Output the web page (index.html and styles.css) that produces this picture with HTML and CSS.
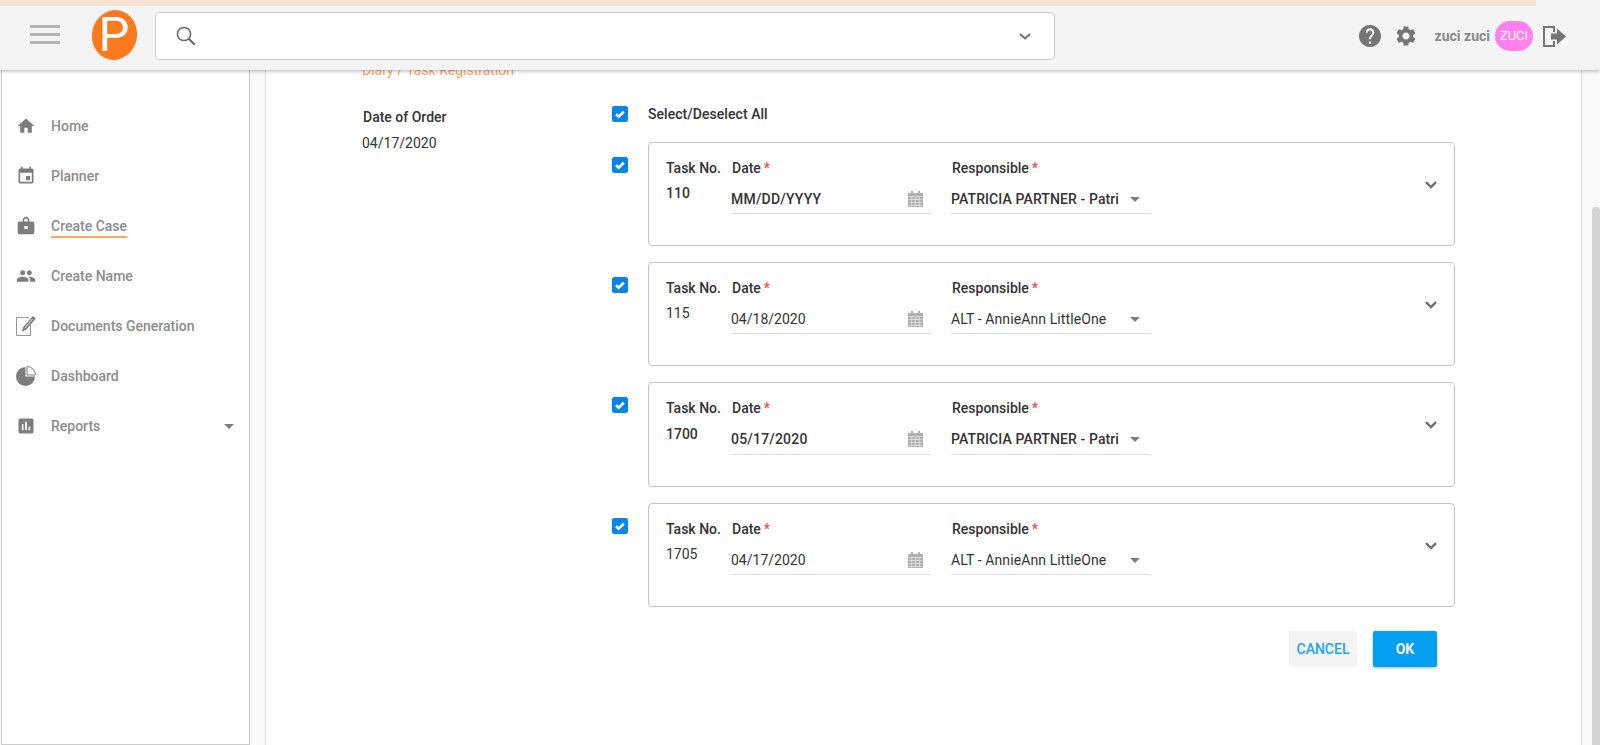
FILE: index.html
```html
<!DOCTYPE html>
<html lang="en">

<head>
  <meta charset="UTF-8">
  <title>Diary / Task Registration</title>
  <link rel="stylesheet" href="styles.css">
</head>

<body>
  <svg class="defs" aria-hidden="true">
    <symbol id="check-mark" viewBox="0 0 16 16">
      <path d="M4 8.300l2.600 2.400 5.200-5" />
    </symbol>
    <symbol id="calendar" viewBox="0 0 15 16">
      <path fill="#b0b0b0" d="M3 0h2v2h5V0h2v2h2c.6 0 1 .4 1 1v12c0 .6-.4 1-1 1H1c-.6 0-1-.4-1-1V3c0-.6.4-1 1-1h2z" />
      <path fill="none" stroke="#e4e4e4" stroke-width=".8" d="M1 5.500h13M1 8.500h13M1 11.500h13M1 14.500h13M3.700 5.500v10M7.500 5.500v10M11.300 5.500v10" />
    </symbol>
    <symbol id="chevron" viewBox="0 0 12 8">
      <path d="M1 1.200l5 4.800 5-4.800" />
    </symbol>
  </svg>

  <header class="topbar">
    <div class="topbar-strip"></div>
    <div class="topbar-row">
      <div class="hamburger"><span></span><span></span><span></span></div>
      <div class="logo"><span>P</span></div>
      <div class="search">
        <svg class="search-icon" viewBox="0 0 20 20">
          <circle cx="8" cy="8" r="6.600" fill="none" stroke="#666" stroke-width="1.500" />
          <path d="M12.800 12.800l6 6" stroke="#666" stroke-width="2" fill="none" />
        </svg>
        <svg class="search-chevron" viewBox="0 0 12 7">
          <path d="M1 1l5 4.400L11 1" fill="none" stroke="#6f6f6f" stroke-width="2" />
        </svg>
      </div>
      <div class="user-area">
        <svg class="help-icon" viewBox="2 2 20 20">
          <path fill="#757575" d="M12 2C6.480 2 2 6.480 2 12s4.480 10 10 10 10-4.480 10-10S17.520 2 12 2zm1 17h-2v-2h2v2zm2.070-7.750l-.9.920C13.450 12.900 13 13.500 13 15h-2v-.5c0-1.100.45-2.100 1.170-2.830l1.240-1.260c.37-.36.59-.86.59-1.410 0-1.100-.9-2-2-2s-2 .9-2 2H8c0-2.210 1.790-4 4-4s4 1.790 4 4c0 .88-.36 1.680-.93 2.250z" />
        </svg>
        <svg class="gear-icon" viewBox="2.500 2 19 20">
          <path fill="#757575" d="M19.140 12.940c.04-.3.06-.61.06-.94 0-.32-.02-.64-.07-.94l2.030-1.580c.18-.14.23-.41.12-.61l-1.920-3.320c-.12-.22-.37-.29-.59-.22l-2.390.96c-.5-.38-1.030-.7-1.620-.94l-.36-2.540c-.04-.24-.24-.41-.48-.41h-3.840c-.24 0-.43.17-.47.41l-.36 2.540c-.59.24-1.130.57-1.620.94l-2.390-.96c-.22-.08-.47 0-.59.22L2.740 8.870c-.12.21-.08.47.12.61l2.030 1.580c-.05.3-.09.63-.09.94s.02.64.07.94l-2.030 1.580c-.18.14-.23.41-.12.61l1.920 3.320c.12.22.37.29.59.22l2.390-.96c.5.38 1.030.7 1.620.94l.36 2.540c.05.24.24.41.48.41h3.840c.24 0 .44-.17.47-.41l.36-2.540c.59-.24 1.130-.56 1.620-.94l2.390.96c.22.08.47 0 .59-.22l1.920-3.320c.12-.22.07-.47-.12-.61l-2.010-1.580zM12 15.600c-1.980 0-3.600-1.620-3.600-3.600s1.620-3.600 3.600-3.600 3.600 1.620 3.600 3.600-1.620 3.600-3.600 3.600z" />
        </svg>
        <span class="user-name">zuci zuci</span>
        <span class="avatar">ZUCI</span>
        <svg class="logout-icon" viewBox="0 0 23 21">
          <path fill="none" stroke="#757575" stroke-width="2" d="M11 6V1H1v19h10v-5" />
          <path fill="#757575" d="M8 7.500h6V2.500l9 8-9 8v-5H8z" />
        </svg>
      </div>
    </div>
  </header>

  <div class="page">
    <nav class="sidebar">
      <a class="nav-item">
        <svg class="nav-icon" viewBox="0 0 24 24"><path d="M10 20v-6h4v6h5v-8h3L12 3 2 12h3v8z" /></svg>
        <span>Home</span>
      </a>
      <a class="nav-item">
        <svg class="nav-icon" viewBox="0 0 24 24"><path d="M17 12h-5v5h5v-5zM16 1v2H8V1H6v2H5c-1.110 0-1.990.9-1.990 2L3 19c0 1.100.89 2 2 2h14c1.100 0 2-.9 2-2V5c0-1.100-.9-2-2-2h-1V1h-2zm3 18H5V8h14v11z" /></svg>
        <span>Planner</span>
      </a>
      <a class="nav-item">
        <svg class="nav-icon" viewBox="0 0 24 24"><path fill-rule="evenodd" d="M8 6.500V5c0-2.200 1.800-4 4-4s4 1.800 4 4v1.500h3.500c1.400 0 2.500 1.100 2.500 2.500v10.500c0 1.400-1.100 2.500-2.500 2.500h-15C3.100 22 2 20.900 2 19.500V9c0-1.400 1.100-2.500 2.500-2.500zm2 0h4V5c0-1.100-.9-2-2-2s-2 .9-2 2zm0 5.500v3.500h4V12z" /></svg>
        <span class="nav-active">Create Case</span>
      </a>
      <a class="nav-item">
        <svg class="nav-icon" viewBox="0 0 24 24"><path d="M16 11c1.660 0 2.990-1.340 2.990-3S17.660 5 16 5c-1.660 0-3 1.340-3 3s1.340 3 3 3zm-8 0c1.660 0 2.990-1.340 2.990-3S9.660 5 8 5C6.340 5 5 6.340 5 8s1.340 3 3 3zm0 2c-2.330 0-7 1.170-7 3.500V19h14v-2.500c0-2.330-4.670-3.500-7-3.500zm8 0c-.29 0-.62.02-.97.05 1.160.84 1.970 1.970 1.970 3.450V19h6v-2.500c0-2.330-4.670-3.500-7-3.500z" /></svg>
        <span>Create Name</span>
      </a>
      <a class="nav-item">
        <svg class="nav-icon" viewBox="0 0 20 20">
          <path fill="none" stroke="#999" stroke-width="1" d="M13 1.500H.5v18h14V9" />
          <path fill="#7d7d7d" d="M16.800 0l3 2.500-9.600 11.300-4.200 2 1.100-4.500z" />
          <path fill="none" stroke="#fff" stroke-width=".8" d="M16.500 3l-7.800 9.300" />
        </svg>
        <span>Documents Generation</span>
      </a>
      <a class="nav-item">
        <svg class="nav-icon" viewBox="0 0 20 20">
          <path d="M9.500 1a9.500 9.500 0 1 0 9.500 9.500H9.500z" />
          <path fill="none" stroke="#7d7d7d" stroke-width="1" d="M11 .5a8.600 8.600 0 0 1 8.500 8.500H11z" />
        </svg>
        <span>Dashboard</span>
      </a>
      <a class="nav-item">
        <svg class="nav-icon" viewBox="0 0 24 24"><path d="M19 3H5c-1.100 0-2 .9-2 2v14c0 1.100.9 2 2 2h14c1.100 0 2-.9 2-2V5c0-1.100-.9-2-2-2zM9 17H7v-7h2v7zm4 0h-2V7h2v10zm4 0h-2v-4h2v4z" /></svg>
        <span>Reports</span>
        <i class="nav-caret"></i>
      </a>
    </nav>

    <div class="gutter"></div>

    <main class="content">
      <div class="page-title">Diary / Task Registration</div>

      <div class="form-area">
        <div class="order-col">
          <div class="order-label">Date of Order</div>
          <div class="order-value">04/17/2020</div>
        </div>

        <div class="tasks-col">
          <div class="select-all">
            <span class="check"><svg><use href="#check-mark" /></svg></span>
            <span class="select-all-label">Select/Deselect All</span>
          </div>

          <div class="task-row">
            <span class="check check-row"><svg><use href="#check-mark" /></svg></span>
            <div class="task-card is-changed">
              <div class="col-no">
                <div class="field-label">Task No.</div>
                <div class="task-no">110</div>
              </div>
              <div class="col-field">
                <div class="field-label">Date<em>*</em></div>
                <div class="field-input">
                  <span class="date-text">MM/DD/YYYY</span>
                  <svg class="cal-icon"><use href="#calendar" /></svg>
                </div>
              </div>
              <div class="col-field">
                <div class="field-label">Responsible<em>*</em></div>
                <div class="field-input">
                  <span class="select-text">PATRICIA PARTNER - Patri</span>
                  <i class="select-caret"></i>
                </div>
              </div>
              <svg class="card-chevron"><use href="#chevron" /></svg>
            </div>
          </div>

          <div class="task-row">
            <span class="check check-row"><svg><use href="#check-mark" /></svg></span>
            <div class="task-card">
              <div class="col-no">
                <div class="field-label">Task No.</div>
                <div class="task-no">115</div>
              </div>
              <div class="col-field">
                <div class="field-label">Date<em>*</em></div>
                <div class="field-input">
                  <span class="date-text">04/18/2020</span>
                  <svg class="cal-icon"><use href="#calendar" /></svg>
                </div>
              </div>
              <div class="col-field">
                <div class="field-label">Responsible<em>*</em></div>
                <div class="field-input">
                  <span class="select-text">ALT - AnnieAnn LittleOne</span>
                  <i class="select-caret"></i>
                </div>
              </div>
              <svg class="card-chevron"><use href="#chevron" /></svg>
            </div>
          </div>

          <div class="task-row">
            <span class="check check-row"><svg><use href="#check-mark" /></svg></span>
            <div class="task-card is-changed is-tall">
              <div class="col-no">
                <div class="field-label">Task No.</div>
                <div class="task-no">1700</div>
              </div>
              <div class="col-field">
                <div class="field-label">Date<em>*</em></div>
                <div class="field-input">
                  <span class="date-text">05/17/2020</span>
                  <svg class="cal-icon"><use href="#calendar" /></svg>
                </div>
              </div>
              <div class="col-field">
                <div class="field-label">Responsible<em>*</em></div>
                <div class="field-input">
                  <span class="select-text">PATRICIA PARTNER - Patri</span>
                  <i class="select-caret"></i>
                </div>
              </div>
              <svg class="card-chevron"><use href="#chevron" /></svg>
            </div>
          </div>

          <div class="task-row">
            <span class="check check-row"><svg><use href="#check-mark" /></svg></span>
            <div class="task-card">
              <div class="col-no">
                <div class="field-label">Task No.</div>
                <div class="task-no">1705</div>
              </div>
              <div class="col-field">
                <div class="field-label">Date<em>*</em></div>
                <div class="field-input">
                  <span class="date-text">04/17/2020</span>
                  <svg class="cal-icon"><use href="#calendar" /></svg>
                </div>
              </div>
              <div class="col-field">
                <div class="field-label">Responsible<em>*</em></div>
                <div class="field-input">
                  <span class="select-text">ALT - AnnieAnn LittleOne</span>
                  <i class="select-caret"></i>
                </div>
              </div>
              <svg class="card-chevron"><use href="#chevron" /></svg>
            </div>
          </div>

          <div class="actions">
            <button class="btn btn-cancel">CANCEL</button>
            <button class="btn btn-ok">OK</button>
          </div>
        </div>
      </div>
    </main>

    <div class="gutter-right"></div>

    <div class="scrollbar"><div class="scrollbar-thumb"></div></div>
  </div>
</body>

</html>
```

FILE: styles.css
```css
html,
body {
  margin: 0;
  height: 100%;
  overflow: hidden;
}

body {
  display: flex;
  flex-direction: column;
  font-family: Roboto, "Liberation Sans", sans-serif;
  font-size: 14px;
  line-height: 20px;
  color: #333;
  background-color: #fafafa;
}

.defs {
  display: none;
}

/* top bar */
.topbar {
  position: relative;
  z-index: 2;
  flex: none;
  height: 70px;
  background-color: #f4f4f4;
  box-shadow: 0 1px 4px rgba(0, 0, 0, 0.3);
}

.topbar-strip {
  width: 1536px;
  height: 6px;
  background-color: #f7e1d0;
}

.topbar-row {
  display: flex;
  height: 64px;
}

.hamburger {
  display: flex;
  flex-direction: column;
  gap: 5px;
  width: 30px;
  margin: 19px 0 0 30px;
}

.hamburger span {
  height: 3px;
  background-color: #b5b5b5;
}

.logo {
  position: relative;
  display: flex;
  align-items: center;
  justify-content: center;
  width: 46px;
  height: 50px;
  margin: 4px 0 0 31px;
}

.logo::before {
  content: "";
  position: absolute;
  inset: 0 0.5px;
  border-radius: 50%;
  background-color: #fb7a1d;
  transform: rotate(12deg);
}

.logo span {
  position: relative;
  font-size: 49px;
  line-height: 50px;
  color: #fff;
}

.search {
  display: flex;
  align-items: center;
  justify-content: space-between;
  box-sizing: border-box;
  width: 900px;
  height: 48px;
  margin: 6px 0 0 18px;
  padding: 0 23px 0 20px;
  background-color: #fff;
  border: 1px solid #ccc;
  border-radius: 4px;
}

.search-icon {
  width: 20px;
  height: 20px;
}

.search-chevron {
  width: 12px;
  height: 7px;
}

.user-area {
  display: flex;
  align-items: center;
  height: 60px;
  margin-left: auto;
  padding-right: 34px;
}

.help-icon {
  width: 22px;
  height: 22px;
}

.gear-icon {
  width: 20px;
  height: 20px;
  margin-left: 15px;
}

.user-name {
  margin-left: 19px;
  font-weight: 700;
  font-size: 14px;
  color: #8a8a8a;
}

.avatar {
  width: 38px;
  height: 30px;
  margin-left: 5px;
  border-radius: 15px;
  background-color: #ff80ee;
  color: #fff;
  font-size: 13px;
  line-height: 30px;
  text-align: center;
}

.logout-icon {
  width: 23px;
  height: 21px;
  margin-left: 10px;
}

/* page */
.page {
  flex: 1;
  display: flex;
  min-height: 0;
  padding-left: 1px;
}

.sidebar {
  box-sizing: border-box;
  flex: none;
  width: 249px;
  padding-top: 31px;
  background-color: #fff;
  border: 1px solid #ccc;
  border-top: 0;
}

.nav-item {
  display: flex;
  align-items: center;
  height: 50px;
  padding-left: 14px;
  font-weight: 500;
  color: #8c8c8c;
}

.nav-icon {
  flex: none;
  width: 20px;
  height: 20px;
  margin-right: 15px;
  fill: #7d7d7d;
}

.nav-active {
  border-bottom: 2px solid #ffa860;
  line-height: 19px;
  margin-top: 2px;
}

.nav-caret {
  margin-left: auto;
  margin-right: 15px;
  border-top: 5px solid #7d7d7d;
  border-left: 5px solid transparent;
  border-right: 5px solid transparent;
}

.gutter {
  flex: none;
  width: 15px;
}

.content {
  box-sizing: border-box;
  flex: none;
  width: 1317px;
  padding-left: 96px;
  background-color: #fff;
  border-left: 1px solid #ddd;
  border-right: 1px solid #ddd;
}

.page-title {
  margin-top: -10px;
  color: #f7a76e;
}

.form-area {
  display: flex;
  margin-top: 22px;
}

.order-col {
  flex: none;
  width: 250px;
  padding-top: 5px;
}

.order-label {
  padding-left: 1px;
  font-weight: 500;
}

.order-value {
  margin-top: 6px;
}

.select-all {
  display: flex;
  height: 24px;
  margin-bottom: 16px;
}

.select-all-label {
  margin: 2px 0 0 20px;
  font-weight: 500;
  letter-spacing: 0.05px;
}

.check {
  flex: none;
  display: block;
  width: 16px;
  height: 16px;
  margin-top: 4px;
  border-radius: 2px;
  background-color: #0a84e6;
}

.check-row {
  margin-top: 15px;
}

.check svg {
  display: block;
  width: 16px;
  height: 16px;
  fill: none;
  stroke: #fff;
  stroke-width: 2.600;
}

.task-row {
  display: flex;
  gap: 20px;
  margin-bottom: 16px;
}

.task-card {
  box-sizing: border-box;
  display: flex;
  width: 807px;
  height: 104px;
  padding: 15px 17px 0;
  border: 1px solid #c4c4c4;
  border-radius: 4px;
}

.task-card.is-tall {
  height: 105px;
}

.col-no {
  flex: none;
  width: 65px;
}

.col-field {
  flex: none;
  width: 200px;
  margin-right: 20px;
}

.field-label {
  padding-left: 1px;
  font-weight: 500;
}

.col-no .field-label {
  padding-left: 0;
}

.field-label em {
  margin-left: 3px;
  color: #f44;
  font-style: normal;
}

.task-no {
  margin-top: 5px;
}

.task-card.is-tall .task-no {
  margin-top: 6px;
}

.field-input {
  box-sizing: border-box;
  display: flex;
  align-items: center;
  justify-content: space-between;
  height: 36px;
  padding: 11px 0 4px;
  border-bottom: 1px solid #ddd;
}

.task-card.is-tall .field-input {
  height: 37px;
  padding-bottom: 5px;
}

.task-card.is-changed .task-no,
.task-card.is-changed .field-input {
  font-weight: 500;
}

.select-text {
  letter-spacing: 0.1px;
}

.task-card.is-changed .date-text {
  letter-spacing: 0.2px;
}

.cal-icon {
  width: 15px;
  height: 16px;
  margin: -1px 8px 0 0;
}

.select-caret {
  margin-right: 11px;
  border-top: 5px solid #7d7d7d;
  border-left: 5px solid transparent;
  border-right: 5px solid transparent;
}

.card-chevron {
  width: 12px;
  height: 8px;
  margin: 23px 0 0 auto;
  fill: none;
  stroke: #6f6f6f;
  stroke-width: 2.400;
}

.actions {
  display: flex;
  justify-content: flex-end;
  gap: 16px;
  margin-top: 24px;
  padding-right: 18px;
}

.btn {
  height: 36px;
  padding: 0;
  border: 0;
  border-radius: 2px;
  font-family: inherit;
  font-size: 14px;
  font-weight: 500;
}

.btn-cancel {
  width: 68px;
  background-color: #f4f4f4;
  color: #1ea5ee;
}

.btn-ok {
  width: 64px;
  background-color: #03a0f2;
  color: #fff;
  font-weight: 700;
  box-shadow: 0 1px 3px rgba(0, 0, 0, 0.3);
}

.gutter-right {
  flex: none;
  width: 10px;
}

.scrollbar {
  flex: none;
  display: flex;
  flex-direction: column;
  width: 8px;
}

.scrollbar-thumb {
  flex: 1;
  margin-top: 137px;
  border-radius: 4px 4px 0 0;
  background-color: #d4d4d4;
}
```
